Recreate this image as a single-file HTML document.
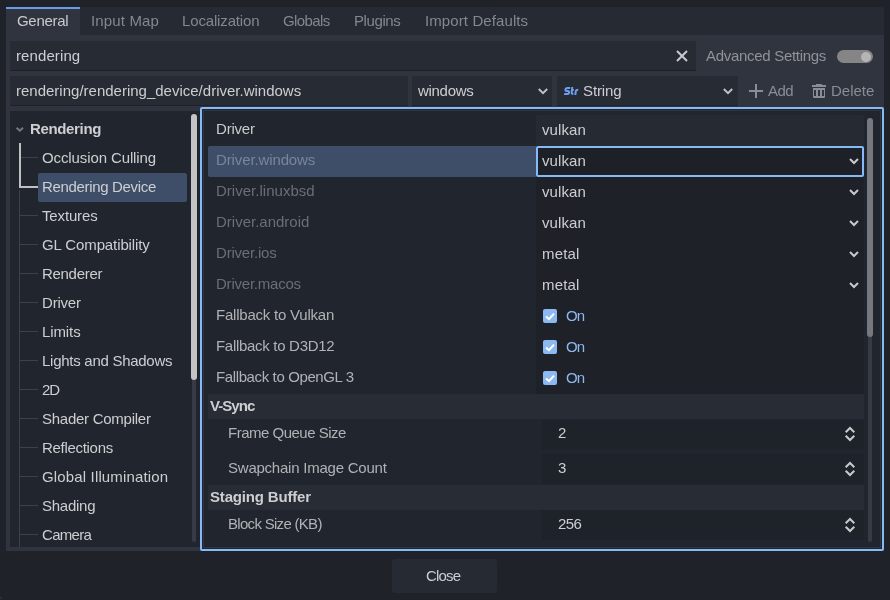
<!DOCTYPE html>
<html><head><meta charset="utf-8">
<style>
*{margin:0;padding:0;box-sizing:border-box}
html,body{width:890px;height:600px;overflow:hidden;background:#1f2229;font-family:"Liberation Sans",sans-serif;font-size:15px;color:#cdced1}
.a{position:absolute}
.t{position:absolute;will-change:transform;line-height:17px;height:17px;white-space:nowrap;letter-spacing:-0.3px}
.b{font-weight:bold}
svg{position:absolute;overflow:visible}
</style></head><body>
<!-- tab bar -->
<div class="a" style="left:6px;top:7px;width:878px;height:28px;background:#262a33;border-radius:2px 2px 0 0"></div>
<div class="a" style="left:6px;top:7px;width:74px;height:28px;background:#30343f;border-top:2px solid #699ce8"></div>
<div class="t" style="left:17px;top:12px;letter-spacing:-0.3px;color:#c9cacd">General</div>
<div class="t" style="left:91px;top:12px;letter-spacing:0.15px;color:#84878e">Input Map</div>
<div class="t" style="left:182px;top:12px;letter-spacing:-0.15px;color:#84878e">Localization</div>
<div class="t" style="left:283px;top:12px;letter-spacing:-0.6px;color:#84878e">Globals</div>
<div class="t" style="left:354px;top:12px;letter-spacing:-0.4px;color:#84878e">Plugins</div>
<div class="t" style="left:425px;top:12px;letter-spacing:0.1px;color:#84878e">Import Defaults</div>
<!-- panel -->
<div class="a" style="left:6px;top:35px;width:878px;height:516px;background:#30343f"></div>
<!-- search row -->
<div class="a" style="left:10px;top:41px;width:686px;height:30px;background:#272b34;border-radius:1px;border-bottom:1px solid #1e2129"></div>
<div class="t" style="left:16px;top:47px;letter-spacing:0.1px">rendering</div>
<svg style="left:676px;top:50px" width="12" height="12"><path d="M1 1L11 11M11 1L1 11" stroke="#c9cacd" stroke-width="2"/></svg>
<div class="t" style="left:706px;top:47px;color:#909298">Advanced Settings</div>
<div class="a" style="left:837px;top:50px;width:36px;height:13px;border-radius:7px;background:#858585"></div>
<div class="a" style="left:861px;top:51.5px;width:10px;height:10px;border-radius:5px;background:#b5b5b5"></div>
<!-- path row -->
<div class="a" style="left:10px;top:76px;width:398px;height:30px;background:#272b34;border-radius:1px;border-bottom:1px solid #1e2129"></div>
<div class="t" style="left:16px;top:82px;letter-spacing:0px">rendering/rendering_device/driver.windows</div>
<div class="a" style="left:412px;top:76px;width:140px;height:30px;background:#272b34;border-radius:1px;border-bottom:1px solid #1e2129"></div>
<div class="t" style="left:418px;top:82px">windows</div>
<svg style="left:537px;top:87px" width="12" height="8"><path d="M1.8 2L6 6.2L10.2 2" stroke="#bfc0c4" stroke-width="2" fill="none"/></svg>
<div class="a" style="left:557px;top:76px;width:181px;height:30px;background:#272b34;border-radius:1px;border-bottom:1px solid #1e2129"></div>
<svg style="left:562px;top:84px" width="18" height="14"><g stroke="#6d9ef2" stroke-width="2" fill="none" transform="skewX(-6) translate(1,0)"><path d="M7.6 4H4.8Q3 4 3 5.5Q3 7 4.8 7H5.2Q7 7 7 8.5Q7 10 5.2 10H2.2"/><path d="M9.6 3V8.6Q9.6 10 11.4 10M8.6 6H11.4"/><path d="M13.5 11V7.6Q13.5 5.8 15.9 5.8"/></g></svg>
<div class="t" style="left:583px;top:82px;letter-spacing:-0.1px">String</div>
<svg style="left:722px;top:87px" width="12" height="8"><path d="M1.8 2L6 6.2L10.2 2" stroke="#bfc0c4" stroke-width="2" fill="none"/></svg>
<svg style="left:749px;top:84px" width="14" height="14"><path d="M7 0V14M0 7H14" stroke="#8a8d94" stroke-width="2"/></svg>
<div class="t" style="left:768px;top:82px;color:#8a8d94;letter-spacing:-0.6px">Add</div>
<svg style="left:812px;top:84px" width="14" height="14"><path fill="#8a8d95" fill-rule="evenodd" d="M4 0H10V1H4ZM0 1H14V3H0ZM1 4H13V13Q13 14 12 14H2Q1 14 1 13ZM2 6V12H4V6ZM6 6V12H8V6ZM10 6V12H12V6Z"/></svg>
<div class="t" style="left:831px;top:82px;color:#8a8d94;letter-spacing:0px">Delete</div>

<!-- tree -->
<div class="a" style="left:10px;top:111px;width:190px;height:436px;background:#21252d"></div>
<!-- scrollbar -->
<div class="a" style="left:192px;top:114px;width:4px;height:428px;background:#383b43;border-radius:2px"></div>
<div class="a" style="left:191px;top:114px;width:6px;height:266px;background:#c4c4c4;border-radius:3px"></div>
<svg style="left:15px;top:126px" width="10" height="7"><path d="M1.6 1.7L4.8 4.7L8 1.7" stroke="#75787f" stroke-width="2" fill="none"/></svg>
<div class="t b" style="left:30px;top:120px;letter-spacing:-0.35px">Rendering</div>
<!-- tree lines -->
<div class="a" style="left:19px;top:190px;width:1px;height:357px;background:#3d414b"></div>
<div class="a" style="left:20px;top:215px;width:18px;height:1px;background:#3d414b"></div>
<div class="a" style="left:20px;top:244px;width:18px;height:1px;background:#3d414b"></div>
<div class="a" style="left:20px;top:273px;width:18px;height:1px;background:#3d414b"></div>
<div class="a" style="left:20px;top:302px;width:18px;height:1px;background:#3d414b"></div>
<div class="a" style="left:20px;top:331px;width:18px;height:1px;background:#3d414b"></div>
<div class="a" style="left:20px;top:360px;width:18px;height:1px;background:#3d414b"></div>
<div class="a" style="left:20px;top:389px;width:18px;height:1px;background:#3d414b"></div>
<div class="a" style="left:20px;top:418px;width:18px;height:1px;background:#3d414b"></div>
<div class="a" style="left:20px;top:447px;width:18px;height:1px;background:#3d414b"></div>
<div class="a" style="left:20px;top:476px;width:18px;height:1px;background:#3d414b"></div>
<div class="a" style="left:20px;top:505px;width:18px;height:1px;background:#3d414b"></div>
<div class="a" style="left:20px;top:534px;width:18px;height:1px;background:#3d414b"></div>
<div class="a" style="left:19px;top:143px;width:2px;height:45px;background:#c0c0c0"></div>
<div class="a" style="left:19px;top:186px;width:19px;height:2px;background:#c0c0c0"></div>
<div class="a" style="left:21px;top:157px;width:17px;height:1px;background:#3d414b"></div>
<div class="a" style="left:38px;top:173px;width:149px;height:29px;background:#3e4e68;border-radius:2px"></div>
<div class="t" style="left:42px;top:149px;letter-spacing:-0.11px">Occlusion Culling</div>
<div class="t" style="left:42px;top:178px;letter-spacing:-0.33px">Rendering Device</div>
<div class="t" style="left:42px;top:207px;letter-spacing:-0.15px">Textures</div>
<div class="t" style="left:42px;top:236px;letter-spacing:-0.11px">GL Compatibility</div>
<div class="t" style="left:42px;top:265px;letter-spacing:-0.3px">Renderer</div>
<div class="t" style="left:42px;top:294px;letter-spacing:-0.2px">Driver</div>
<div class="t" style="left:42px;top:323px;letter-spacing:-0.1px">Limits</div>
<div class="t" style="left:42px;top:352px;letter-spacing:-0.27px">Lights and Shadows</div>
<div class="t" style="left:42px;top:381px;letter-spacing:-1px">2D</div>
<div class="t" style="left:42px;top:410px;letter-spacing:-0.26px">Shader Compiler</div>
<div class="t" style="left:42px;top:439px;letter-spacing:-0.3px">Reflections</div>
<div class="t" style="left:42px;top:468px;letter-spacing:0.15px">Global Illumination</div>
<div class="t" style="left:42px;top:497px;letter-spacing:-0.25px">Shading</div>
<div class="t" style="left:42px;top:526px;letter-spacing:-0.7px">Camera</div>

<!-- inspector -->
<div class="a" style="left:200px;top:107px;width:684px;height:444px;border:2px solid #86baf6;border-radius:2px;background:#21252d"></div>
<div class="a" style="left:203px;top:110px;width:678px;height:438px;border:1px solid #30343e"></div>
<!-- rows -->
<div class="a" style="left:536px;top:115px;width:328px;height:31px;background:#262a33;border-radius:2px"></div>
<div class="t" style="left:216px;top:120px;color:#c9cacd;letter-spacing:-0.2px">Driver</div>
<div class="t" style="left:542px;top:121px;letter-spacing:0.1px">vulkan</div>

<div class="a" style="left:208px;top:146px;width:328px;height:31px;background:#3e4e68;border-radius:2px 0 0 2px"></div>
<div class="t" style="left:216px;top:151px;color:#7b8597;letter-spacing:-0.12px">Driver.windows</div>
<div class="a" style="left:536px;top:146px;width:328px;height:31px;background:#1d2027;border:2px solid #86baf6;border-radius:2px"></div>
<div class="t" style="left:542px;top:152px;letter-spacing:0.1px">vulkan</div>
<svg style="left:849px;top:158px" width="10" height="6"><path d="M1 1L5 5L9 1" stroke="#c9cacd" stroke-width="2" fill="none"/></svg>

<div class="a" style="left:536px;top:177px;width:328px;height:217px;background:#1e2128"></div>
<div class="t" style="left:216px;top:182px;color:#6b6e75;letter-spacing:0.02px">Driver.linuxbsd</div>
<div class="t" style="left:542px;top:183px;letter-spacing:0.1px">vulkan</div>
<svg style="left:849px;top:189px" width="10" height="6"><path d="M1 1L5 5L9 1" stroke="#c9cacd" stroke-width="2" fill="none"/></svg>
<div class="t" style="left:216px;top:213px;color:#6b6e75;letter-spacing:0px">Driver.android</div>
<div class="t" style="left:542px;top:214px;letter-spacing:0.1px">vulkan</div>
<svg style="left:849px;top:220px" width="10" height="6"><path d="M1 1L5 5L9 1" stroke="#c9cacd" stroke-width="2" fill="none"/></svg>
<div class="t" style="left:216px;top:244px;color:#6b6e75;letter-spacing:-0.2px">Driver.ios</div>
<div class="t" style="left:542px;top:245px;letter-spacing:0.15px">metal</div>
<svg style="left:849px;top:251px" width="10" height="6"><path d="M1 1L5 5L9 1" stroke="#c9cacd" stroke-width="2" fill="none"/></svg>
<div class="t" style="left:216px;top:275px;color:#6b6e75;letter-spacing:-0.22px">Driver.macos</div>
<div class="t" style="left:542px;top:276px;letter-spacing:0.15px">metal</div>
<svg style="left:849px;top:282px" width="10" height="6"><path d="M1 1L5 5L9 1" stroke="#c9cacd" stroke-width="2" fill="none"/></svg>

<div class="t" style="left:216px;top:306px;color:#b0b2b6;letter-spacing:-0.22px">Fallback to Vulkan</div>
<div class="t" style="left:216px;top:337px;color:#b0b2b6;letter-spacing:-0.3px">Fallback to D3D12</div>
<div class="t" style="left:216px;top:368px;color:#b0b2b6;letter-spacing:-0.38px">Fallback to OpenGL 3</div>
<div class="a" style="left:543px;top:309px;width:14px;height:14px;background:#8cb9f2;border-radius:2px"></div>
<svg style="left:543px;top:309px" width="14" height="14"><path d="M3 7.6L6 10.2L11 4.6" stroke="#fff" stroke-width="2" fill="none"/></svg>
<div class="t" style="left:566px;top:307px;color:#8cb9f2;letter-spacing:-1px">On</div>
<div class="a" style="left:543px;top:340px;width:14px;height:14px;background:#8cb9f2;border-radius:2px"></div>
<svg style="left:543px;top:340px" width="14" height="14"><path d="M3 7.6L6 10.2L11 4.6" stroke="#fff" stroke-width="2" fill="none"/></svg>
<div class="t" style="left:566px;top:338px;color:#8cb9f2;letter-spacing:-1px">On</div>
<div class="a" style="left:543px;top:371px;width:14px;height:14px;background:#8cb9f2;border-radius:2px"></div>
<svg style="left:543px;top:371px" width="14" height="14"><path d="M3 7.6L6 10.2L11 4.6" stroke="#fff" stroke-width="2" fill="none"/></svg>
<div class="t" style="left:566px;top:369px;color:#8cb9f2;letter-spacing:-1px">On</div>

<div class="a" style="left:208px;top:394px;width:656px;height:25px;background:#282c35"></div>
<div class="t b" style="left:210px;top:397px;letter-spacing:-0.95px">V-Sync</div>
<div class="t" style="left:228px;top:424px;color:#b0b2b6;letter-spacing:-0.5px">Frame Queue Size</div>
<div class="a" style="left:542px;top:420px;width:322px;height:29px;background:#1e2229;border-radius:2px"></div>
<div class="t" style="left:558px;top:424px">2</div>
<svg style="left:845px;top:427px" width="10" height="14"><path d="M0.7 5.3L5 1L9.3 5.3M0.7 8.7L5 13L9.3 8.7" stroke="#c9cacd" stroke-width="2" fill="none"/></svg>
<div class="t" style="left:228px;top:459px;color:#b0b2b6;letter-spacing:-0.23px">Swapchain Image Count</div>
<div class="a" style="left:542px;top:454px;width:322px;height:30px;background:#1e2229;border-radius:2px"></div>
<div class="t" style="left:558px;top:459px">3</div>
<svg style="left:845px;top:462px" width="10" height="14"><path d="M0.7 5.3L5 1L9.3 5.3M0.7 8.7L5 13L9.3 8.7" stroke="#c9cacd" stroke-width="2" fill="none"/></svg>
<div class="a" style="left:208px;top:485px;width:656px;height:25px;background:#282c35"></div>
<div class="t b" style="left:210px;top:488px;letter-spacing:-0.17px">Staging Buffer</div>
<div class="t" style="left:228px;top:515px;color:#b0b2b6;letter-spacing:-0.7px">Block Size (KB)</div>
<div class="a" style="left:542px;top:510px;width:322px;height:30px;background:#1e2229;border-radius:2px"></div>
<div class="t" style="left:558px;top:515px;letter-spacing:-0.6px">256</div>
<svg style="left:845px;top:518px" width="10" height="14"><path d="M0.7 5.3L5 1L9.3 5.3M0.7 8.7L5 13L9.3 8.7" stroke="#c9cacd" stroke-width="2" fill="none"/></svg>
<!-- inspector scrollbar -->
<div class="a" style="left:868px;top:118px;width:4px;height:424px;background:#383b43;border-radius:2px"></div>
<div class="a" style="left:867px;top:118px;width:6px;height:219px;background:#76787d;border-radius:3px"></div>

<!-- close -->
<div class="a" style="left:392px;top:559px;width:105px;height:34px;background:#262a33;border-radius:3px"></div>
<div class="t" style="left:426px;top:567px;letter-spacing:-0.8px">Close</div>
<div class="a" style="left:0;top:597px;width:2px;height:2px;background:#34383e;border-radius:1px"></div>
</body></html>
